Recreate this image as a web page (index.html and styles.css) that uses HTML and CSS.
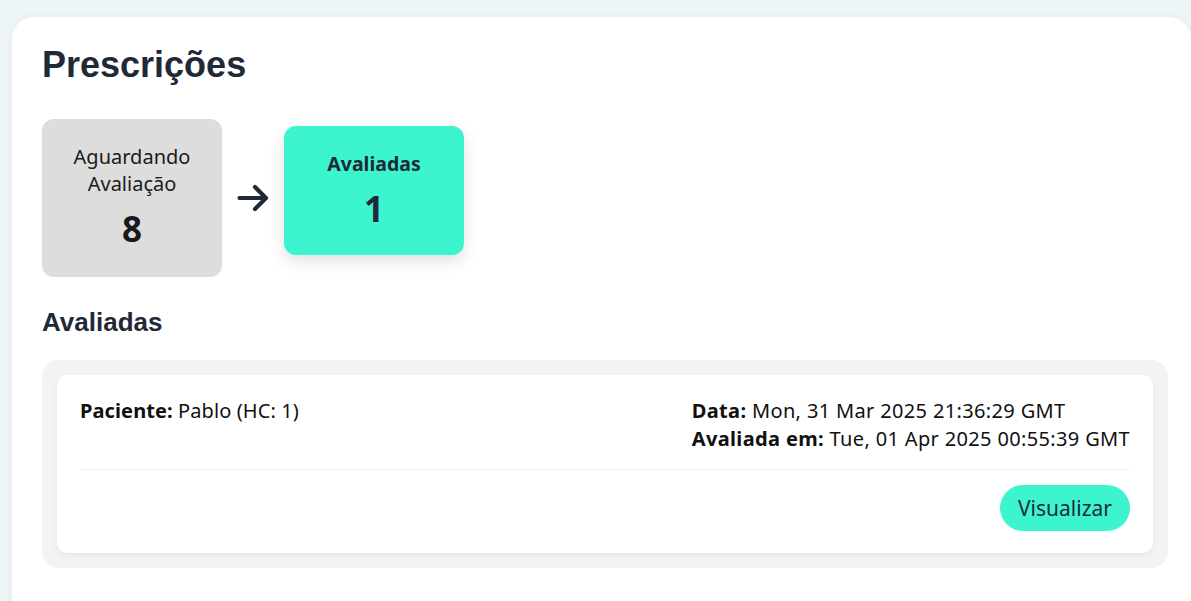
FILE: index.html
```html
<!DOCTYPE html>
<html lang="pt">
<head>
<meta charset="utf-8">
<title>Prescrições</title>
<link rel="stylesheet" href="styles.css">
</head>
<body>
<main class="panel">
  <h1 class="title">Prescrições</h1>
  <section class="stats">
    <div class="stat stat-waiting">
      <div class="stat-label">Aguardando<br>Avaliação</div>
      <div class="stat-value">8</div>
    </div>
    <svg class="arrow" width="32" height="30" viewBox="0 0 32 30" aria-hidden="true">
      <path d="M2.5 15 H29 M18 4 L29 15 L18 26" fill="none" stroke="#1f2937" stroke-width="4.2" stroke-linecap="round" stroke-linejoin="round"/>
    </svg>
    <div class="stat stat-active">
      <div class="stat-label">Avaliadas</div>
      <div class="stat-value">1</div>
    </div>
  </section>
  <h2 class="subtitle">Avaliadas</h2>
  <section class="list">
    <article class="item">
      <div class="item-top">
        <div class="item-left"><b>Paciente:</b> Pablo (HC: 1)</div>
        <div class="item-right">
          <div><b>Data:</b> Mon, 31 Mar 2025 21:36:29 GMT</div>
          <div><b>Avaliada em:</b> Tue, 01 Apr 2025 00:55:39 GMT</div>
        </div>
      </div>
      <div class="item-actions">
        <button class="btn">Visualizar</button>
      </div>
    </article>
  </section>
</main>
</body>
</html>
```
FILE: styles.css
```css
html, body {
  margin: 0;
  padding: 0;
  overflow: hidden;
}
body {
  background: #eef5f7;
  font-family: "Noto Sans", sans-serif;
  color: #1f2937;
  height: 601px;
}
.panel {
  margin: 17px 0 0 12px;
  background: #ffffff;
  border-radius: 22px 22px 0 0;
  padding: 26px 23px 40px 30px;
  min-height: 600px;
  box-shadow: 0 0 8px rgba(0, 0, 0, 0.05);
}
.title {
  font-family: "Liberation Sans", Arial, sans-serif;
  font-size: 36px;
  font-weight: 700;
  line-height: 1.2;
  margin: 0 0 33px;
  color: #1f2937;
}
.stats {
  display: flex;
  align-items: center;
  gap: 15px;
}
.stat {
  width: 180px;
  box-sizing: border-box;
  border-radius: 12px;
  text-align: center;
  padding: 24px 8px 26px;
}
.stat-waiting {
  background: #dddddd;
  color: #1a1a1a;
}
.stat-active {
  background: #3cf5cf;
  color: #1f2937;
  margin-bottom: 15px;
  box-shadow: 0 6px 16px rgba(0, 0, 0, 0.12);
  padding: 24px 8px 24px;
}
.stat-label {
  font-size: 20px;
  line-height: 27px;
}
.stat-active .stat-label {
  font-weight: 700;
  font-size: 19.5px;
}
.stat-value {
  font-size: 35px;
  font-weight: 700;
  line-height: 44px;
  margin-top: 10px;
}
.arrow {
  display: block;
}
.subtitle {
  font-family: "Liberation Sans", Arial, sans-serif;
  font-size: 26px;
  font-weight: 700;
  line-height: 1.2;
  margin: 30px 0 22px;
  color: #1f2937;
}
.list {
  background: #f3f3f3;
  border-radius: 16px;
  padding: 15px;
}
.item {
  background: #ffffff;
  border-radius: 10px;
  padding: 22px 23px 22px 23px;
  box-shadow: 0 2px 6px rgba(0, 0, 0, 0.06);
}
.item-top {
  display: flex;
  justify-content: space-between;
  font-size: 20px;
  letter-spacing: 0.35px;
  line-height: 28px;
  color: #111;
  padding-bottom: 16px;
  border-bottom: 1px solid #eeeeee;
}
.item-left {
  letter-spacing: 0.1px;
}
.item-actions {
  display: flex;
  justify-content: flex-end;
  padding-top: 15px;
}
.btn {
  font-family: inherit;
  font-size: 21px;
  color: #1f2937;
  background: #3cf5cf;
  border: none;
  border-radius: 23px;
  height: 46px;
  padding: 0 18px;
}
```
